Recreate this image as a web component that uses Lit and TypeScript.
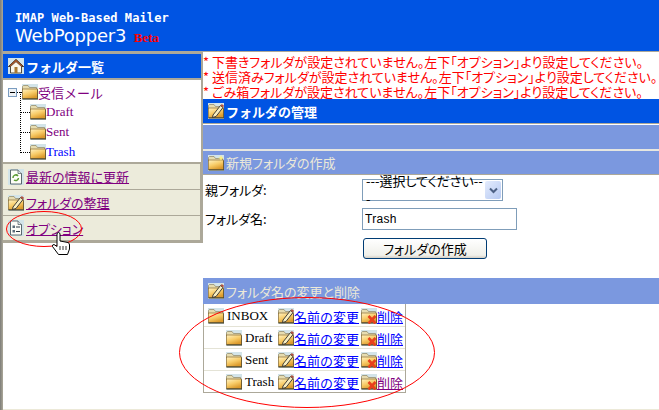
import { LitElement, html, css, svg } from "lit";
import { customElement } from "lit/decorators.js";

const folderShape = svg`
  <path d="M0.5 6V2.500L1.500 1.500H6L7.500 3.500H14.500V6Z" fill="#e6dcb0" stroke="#8d8464" stroke-width=".7"/>
  <rect x="0.500" y="5" width="15" height="9.500" fill="url(#fg)" stroke="#8a6c30" stroke-width=".7"/>
  <path d="M0.500 15H16V5.500" fill="none" stroke="#3d3418" stroke-width="1"/>`;

const defs = svg`<defs><linearGradient id="fg" x1="0" y1="0" x2="0.5" y2="1">
  <stop offset="0" stop-color="#fff3c4"/><stop offset=".55" stop-color="#f8cc68"/><stop offset="1" stop-color="#dc9a2c"/>
</linearGradient></defs>`;

const pencil = svg`
  <path d="M5 12L12.500 2.500L15 4.500L8 13.500L4.500 14.500Z" fill="#f9efc0" stroke="#2c2c2c" stroke-width=".9"/>
  <path d="M12.500 2.500L13.800 1L16 2.800L15 4.500Z" fill="#b2533f"/>`;

const icon = (body: unknown) => html`<svg class="ico" viewBox="0 0 16 16" width="16" height="16">${defs}${body}</svg>`;

const folder = () => icon(folderShape);
const folderEdit = () => icon(svg`${folderShape}${pencil}`);
const folderNew = () => icon(svg`${folderShape}<path d="M13 0L13.800 2.200L16 3L13.800 3.800L13 6L12.200 3.800L10 3L12.200 2.200Z" fill="#fff27a"/>`);
const folderDel = () => icon(svg`${folderShape}<path d="M7.500 8L14.500 15.500M14.500 8L7.500 15.500" stroke="#e8401c" stroke-width="2.600"/>`);
const home = () => icon(svg`
  <path d="M8 1.500L15.500 8.500H13.500V15H2.500V8.500H0.500Z" fill="#fbf7ea" stroke="#403828" stroke-width=".9"/>
  <path d="M8 1.500L15.500 8.500H13.500L8 3.800L2.500 8.500H0.500Z" fill="#b85a28" stroke="#3a2818" stroke-width=".6"/>
  <rect x="6.500" y="9" width="3" height="6" fill="#a87830"/>`);
const page = (inner: unknown) => icon(svg`
  <path d="M2.500 1H10L13.500 4.500V15H2.500Z" fill="#fdfdf8" stroke="#4a5a60" stroke-width=".9"/>
  <path d="M10 1V4.500H13.500" fill="#dfe6e8" stroke="#4a5a60" stroke-width=".7"/>${inner}`);
const refresh = () => page(svg`<path d="M5 9A2.800 2.800 0 0 1 10 7M10.500 9A2.800 2.800 0 0 1 6 11" fill="none" stroke="#5a9a30" stroke-width="1.500"/>`);
const options = () => page(svg`<path d="M4.500 5.500h2.500v2.500H4.500zM4.500 10h2.500v2.500H4.500z" fill="#5b6b78"/><path d="M8 7h4M8 11.500h4" stroke="#2c3844" stroke-width="1.100"/>`);

@customElement("app-root")
export class AppRoot extends LitElement {
  static styles = css`
    :host {
      display: block;
      width: 659px;
      height: 410px;
      overflow: hidden;
      position: relative;
      background: linear-gradient(90deg, #7d7d78, #aca899 3px);
      font: 12px "Noto Sans CJK JP", sans-serif;
      font-feature-settings: "palt";
      color: #000;
    }
    .page {
      margin-left: 3px;
      height: 410px;
      box-sizing: border-box;
      background: #fff;
      border-bottom: 1px solid #ece9d8;
    }
    .ico { display: block; flex: none; background: #d3e4e9; }
    a { color: #00f; text-decoration: underline; }
    a.seen { color: #800080; }

    .top {
      height: 51px;
      box-sizing: border-box;
      background: #0054e3;
      color: #fff;
      padding: 11px 0 0 12px;
    }
    .top .sub { font: bold 12px/14px "DejaVu Sans Mono", monospace; letter-spacing: .1px; }
    .top .name { font: 18px/21px "DejaVu Sans", sans-serif; letter-spacing: -.2px; }
    .top .beta { font: bold 13px "Liberation Serif", serif; color: #f00; margin-left: 2px; letter-spacing: 0; }

    .body { display: flex; }
    .side {
      width: 198px;
      flex: none;
      align-self: flex-start;
      border: solid #aca899;
      border-width: 3px 2px 3px 0;
    }
    .side-title, .title {
      height: 24px;
      background: #0054e3;
      color: #fff;
      font-weight: bold;
      font-size: 13px;
      font-feature-settings: normal;
      display: flex;
      align-items: center;
      gap: 2px;
      padding-left: 5px;
    }
    .tree {
      height: 86px;
      padding-top: 2px;
      box-sizing: border-box;
      font: 13px "Liberation Serif", "Noto Sans CJK JP", serif;
      border: solid #aca899;
      border-width: 2px 0;
    }
    .tree-row { display: flex; align-items: center; height: 20px; color: #800080; }
    .tree-row.child { padding-left: 27px; position: relative; }
    .tree-row.child::before {
      content: "";
      position: absolute;
      left: 17px;
      top: -10px;
      height: 20px;
      width: 9px;
      border-left: 1px dotted #000;
      border-bottom: 1px dotted #000;
    }
    .tree-row.current { color: #00f; }
    .toggle {
      width: 9px;
      height: 9px;
      box-sizing: border-box;
      border: 1px solid #7a9cc0;
      background: #eef2f6;
      margin-left: 5px;
      position: relative;
    }
    .toggle::after { content: ""; position: absolute; left: 1px; right: 1px; top: 3px; height: 1px; background: #000; }
    .dots { width: 5px; border-top: 1px dotted #000; }
    .menu { background: #ecebdb; border-right: 1px solid #aca899; }
    .menu-row {
      height: 26px;
      box-sizing: border-box;
      display: flex;
      align-items: center;
      gap: 2px;
      padding-left: 5px;
      font-size: 13px;
      border-bottom: 1px solid #aca899;
    }
    .menu-row:last-child { border-bottom: 0; height: 24px; }
    .menu-row a { color: #800080; }

    main { flex: 1; min-width: 0; border-top: 1px solid #aca899; }
    .notes { color: #f00; font-size: 13px; line-height: 15px; height: 47px; white-space: nowrap; padding-top: 2px; box-sizing: border-box; }
    .title { border-bottom: 1px solid #aca899; margin-bottom: 1px; }
    .band { height: 24px; background: #7b98df; border-bottom: 2px solid #e6e6e0; }
    .sec {
      height: 24px;
      box-sizing: border-box;
      background: #7b98df;
      color: #ece9d8;
      font-size: 13px;
      display: flex;
      align-items: center;
      gap: 2px;
      padding-left: 5px;
      border-bottom: 1px solid #aca899;
    }
    .sec.last { height: 26px; border-bottom: 0; }
    .form {
      display: grid;
      grid-template-columns: 157px 1fr;
      grid-template-rows: 29px 30px 21px;
      align-items: start;
      padding: 4px 0 0 2px;
      height: 103px;
      box-sizing: border-box;
      font-size: 13px;
      line-height: 22px;
    }
    .select {
      width: 141px;
      height: 22px;
      box-sizing: border-box;
      border: 1px solid #7f9db9;
      display: flex;
      align-items: center;
      justify-content: space-between;
      padding: 0 1px 0 3px;
      background: #fff;
      line-height: 18px;
    }
    .select i {
      width: 16px;
      height: 18px;
      background: linear-gradient(135deg, #e4ecfd, #b6c9f2);
      border-radius: 2px;
      display: flex;
      align-items: center;
      justify-content: center;
    }
    input {
      width: 155px;
      height: 22px;
      box-sizing: border-box;
      border: 1px solid #7f9db9;
      padding: 0 2px;
      font: 12px "Liberation Sans", sans-serif;
      letter-spacing: .3px;
      outline: none;
    }
    button {
      width: 124px;
      height: 21px;
      margin-left: 1px;
      box-sizing: border-box;
      border: 1px solid #003c74;
      border-radius: 3px;
      background: linear-gradient(#fff, #f0f0ea 85%, #d6d0c5);
      font: 13px/17px "Noto Sans CJK JP", sans-serif;
      font-feature-settings: "palt";
      padding: 0;
      color: #000;
    }
    table {
      border-collapse: separate;
      border-spacing: 0;
      width: 203px;
      table-layout: fixed;
      border: solid #aca899;
      border-width: 0 1px 1px;
      padding-top: 1px;
      box-sizing: border-box;
      font: 13px "Liberation Serif", "Noto Sans CJK JP", serif;
    }
    td { height: 22px; box-sizing: border-box; padding: 0; border-bottom: 1px solid #e4e3d6; }
    tr:last-child td { border-bottom: 0; height: 21px; }
    .cell { display: flex; align-items: center; white-space: nowrap; }
    .cell.name { gap: 3px; padding-left: 4px; }
    .cell.name.sub { padding-left: 22px; }
    td a { font-family: "Noto Sans CJK JP", sans-serif; font-size: 13px; line-height: 16px; padding-top: 2px; }
    .overlay { position: absolute; left: 0; top: 0; pointer-events: none; }
  `;

  render() {
    const rows = [
      { name: "INBOX", sub: false },
      { name: "Draft", sub: true },
      { name: "Sent", sub: true },
      { name: "Trash", sub: true },
    ];
    return html`
      <div class="page">
        <div class="top">
          <div class="sub">IMAP Web-Based Mailer</div>
          <div class="name">WebPopper3 <span class="beta">Beta</span></div>
        </div>
        <div class="body">
          <div class="side">
            <div class="side-title">${home()}フォルダ一覧</div>
            <div class="tree">
              <div class="tree-row"><span class="toggle"></span><span class="dots"></span>${folder()}受信メール</div>
              <div class="tree-row child">${folder()}Draft</div>
              <div class="tree-row child">${folder()}Sent</div>
              <div class="tree-row child current">${folder()}Trash</div>
            </div>
            <div class="menu">
              <div class="menu-row">${refresh()}<a href="#">最新の情報に更新</a></div>
              <div class="menu-row">${folderEdit()}<a href="#">フォルダの整理</a></div>
              <div class="menu-row">${options()}<a href="#">オプション</a></div>
            </div>
          </div>
          <main>
            <div class="notes">
              <div>* 下書きフォルダが設定されていません。左下「オプション」より設定してください。</div>
              <div>* 送信済みフォルダが設定されていません。左下「オプション」より設定してください。</div>
              <div>* ごみ箱フォルダが設定されていません。左下「オプション」より設定してください。</div>
            </div>
            <div class="title">${folderEdit()}フォルダの管理</div>
            <div class="band"></div>
            <div class="sec">${folderNew()}新規フォルダの作成</div>
            <div class="form">
              <label>親フォルダ:</label>
              <div class="select"><span>---選択してください---</span><i><svg width="9" height="7" viewBox="0 0 9 7"><path d="M1 1.500L4.500 5L8 1.500" fill="none" stroke="#4d6185" stroke-width="2"/></svg></i></div>
              <label>フォルダ名:</label>
              <input value="Trash" />
              <span></span>
              <button>フォルダの作成</button>
            </div>
            <div class="sec last">${folderEdit()}フォルダ名の変更と削除</div>
            <table>
              <colgroup><col style="width:74px" /><col style="width:83px" /><col /></colgroup>
              ${rows.map((r) => html`
                <tr>
                  <td><div class="cell name ${r.sub ? "sub" : ""}">${folder()}${r.name}</div></td>
                  <td><div class="cell">${folderEdit()}<a href="#">名前の変更</a></div></td>
                  <td><div class="cell">${folderDel()}<a href="#" class="${r.name === "Trash" ? "seen" : ""}">削除</a></div></td>
                </tr>`)}
            </table>
          </main>
        </div>
      </div>
      <svg class="overlay" width="659" height="410" viewBox="0 0 659 410">
        <ellipse cx="44" cy="229" rx="37.500" ry="17.500" fill="none" stroke="#f00"/>
        <ellipse cx="307" cy="352.500" rx="127.500" ry="55" fill="none" stroke="#f00"/>
        <path d="M57 233.500Q58.500 231.500 60 233.500V241L68 242.500Q69.500 243 69.500 245V249L67.500 254.500H58.500L52.500 246.500Q52 244.500 54 244.500L57 246.500Z" fill="#fff" stroke="#000"/>
        <path d="M60 246V250M63 246V250M66 246V250" stroke="#000" stroke-width=".8"/>
      </svg>
    `;
  }
}
